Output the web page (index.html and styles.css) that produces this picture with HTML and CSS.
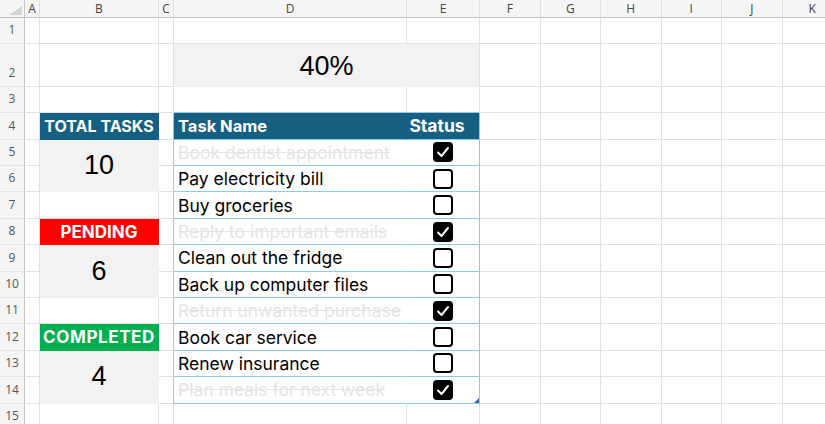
FILE: index.html
```html
<!DOCTYPE html>
<html lang="en">
<head>
    <meta charset="UTF-8">
    <meta name="viewport" content="width=device-width, initial-scale=1.0">
    <title>Task Tracker</title>
    <link rel="stylesheet" href="styles.css">
</head>
<body>
    <table class="sheet">
        <colgroup>
            <col class="w-head"><col class="w-gap"><col class="w-card"><col class="w-gap"><col class="w-task"><col class="w-status">
            <col class="w-std"><col class="w-std"><col class="w-std"><col class="w-std"><col class="w-std"><col class="w-std">
        </colgroup>
        <thead>
            <tr>
                <th class="corner"></th><th>A</th><th>B</th><th>C</th><th>D</th><th>E</th><th>F</th><th>G</th><th>H</th><th>I</th><th>J</th><th>K</th>
            </tr>
        </thead>
        <tbody>
            <tr>
                <th>1</th><td></td><td></td><td></td><td></td><td></td><td></td><td></td><td></td><td></td><td></td><td></td>
            </tr>
            <tr class="tall">
                <th>2</th><td></td><td></td><td></td><td class="progress" colspan="2">40%</td><td></td><td></td><td></td><td></td><td></td><td></td>
            </tr>
            <tr>
                <th>3</th><td></td><td></td><td></td><td class="above"></td><td class="above"></td><td></td><td></td><td></td><td></td><td></td><td></td>
            </tr>
            <tr>
                <th>4</th><td></td><td class="card teal">TOTAL TASKS</td><td class="edge"></td>
                <td class="task-head">Task Name</td><td class="status-head">Status</td>
                <td></td><td></td><td></td><td></td><td></td><td></td>
            </tr>
            <tr>
                <th>5</th><td></td><td class="count" rowspan="2">10</td><td class="edge"></td>
                <td class="task done">Book dentist appointment</td>
                <td class="status"><svg class="box" viewBox="0 0 20 20"><rect x="1" y="1" width="18" height="18" rx="3" class="on"/><path d="M5 10.5 L8.5 14 L15 6"/></svg></td>
                <td></td><td></td><td></td><td></td><td></td><td></td>
            </tr>
            <tr>
                <th>6</th><td></td><td class="edge"></td>
                <td class="task">Pay electricity bill</td>
                <td class="status"><svg class="box" viewBox="0 0 20 20"><rect x="1" y="1" width="18" height="18" rx="3"/></svg></td>
                <td></td><td></td><td></td><td></td><td></td><td></td>
            </tr>
            <tr>
                <th>7</th><td></td><td></td><td class="edge"></td>
                <td class="task">Buy groceries</td>
                <td class="status"><svg class="box" viewBox="0 0 20 20"><rect x="1" y="1" width="18" height="18" rx="3"/></svg></td>
                <td></td><td></td><td></td><td></td><td></td><td></td>
            </tr>
            <tr>
                <th>8</th><td></td><td class="card red">PENDING</td><td class="edge"></td>
                <td class="task done">Reply to important emails</td>
                <td class="status"><svg class="box" viewBox="0 0 20 20"><rect x="1" y="1" width="18" height="18" rx="3" class="on"/><path d="M5 10.5 L8.5 14 L15 6"/></svg></td>
                <td></td><td></td><td></td><td></td><td></td><td></td>
            </tr>
            <tr>
                <th>9</th><td></td><td class="count" rowspan="2">6</td><td class="edge"></td>
                <td class="task">Clean out the fridge</td>
                <td class="status"><svg class="box" viewBox="0 0 20 20"><rect x="1" y="1" width="18" height="18" rx="3"/></svg></td>
                <td></td><td></td><td></td><td></td><td></td><td></td>
            </tr>
            <tr>
                <th>10</th><td></td><td class="edge"></td>
                <td class="task">Back up computer files</td>
                <td class="status"><svg class="box" viewBox="0 0 20 20"><rect x="1" y="1" width="18" height="18" rx="3"/></svg></td>
                <td></td><td></td><td></td><td></td><td></td><td></td>
            </tr>
            <tr>
                <th>11</th><td></td><td></td><td class="edge"></td>
                <td class="task done">Return unwanted purchase</td>
                <td class="status"><svg class="box" viewBox="0 0 20 20"><rect x="1" y="1" width="18" height="18" rx="3" class="on"/><path d="M5 10.5 L8.5 14 L15 6"/></svg></td>
                <td></td><td></td><td></td><td></td><td></td><td></td>
            </tr>
            <tr>
                <th>12</th><td></td><td class="card green">COMPLETED</td><td class="edge"></td>
                <td class="task">Book car service</td>
                <td class="status"><svg class="box" viewBox="0 0 20 20"><rect x="1" y="1" width="18" height="18" rx="3"/></svg></td>
                <td></td><td></td><td></td><td></td><td></td><td></td>
            </tr>
            <tr>
                <th>13</th><td></td><td class="count" rowspan="2">4</td><td class="edge"></td>
                <td class="task">Renew insurance</td>
                <td class="status"><svg class="box" viewBox="0 0 20 20"><rect x="1" y="1" width="18" height="18" rx="3"/></svg></td>
                <td></td><td></td><td></td><td></td><td></td><td></td>
            </tr>
            <tr>
                <th>14</th><td></td><td class="edge"></td>
                <td class="task done">Plan meals for next week</td>
                <td class="status last"><svg class="box" viewBox="0 0 20 20"><rect x="1" y="1" width="18" height="18" rx="3" class="on"/><path d="M5 10.5 L8.5 14 L15 6"/></svg></td>
                <td></td><td></td><td></td><td></td><td></td><td></td>
            </tr>
            <tr>
                <th>15</th><td></td><td></td><td></td><td></td><td></td><td></td><td></td><td></td><td></td><td></td><td></td>
            </tr>
        </tbody>
    </table>
</body>
</html>
```

FILE: styles.css
```css
body {
    margin: 0;
    background: #fff;
    overflow: hidden;
}
.sheet {
    border-collapse: separate;
    border-spacing: 0;
    table-layout: fixed;
    width: 843px;
    font-family: 'Inter', sans-serif;
    color: #000;
}
.w-head { width: 25px; }
.w-gap { width: 15px; }
.w-card { width: 119px; }
.w-task { width: 233px; }
.w-status { width: 73px; }
.w-std { width: 60.5px; }

/* column and row headers */
.sheet thead th {
    height: 17px;
    padding: 0;
    background: #f5f5f5;
    border-right: 1px solid #e0e0e0;
    border-bottom: 1px solid #c4c4c4;
    font: 12px 'Open Sans', sans-serif;
    color: #444;
    text-align: center;
    box-sizing: border-box;
}
.sheet thead th.corner {
    border-right: 1px solid #c4c4c4;
    background: #f5f5f5 linear-gradient(to top left, #d4d4d4 50%, transparent 50%) no-repeat right 2px bottom 2px / 13px 9px;
}
.sheet tbody th {
    padding: 0 0 5px;
    background: #f5f5f5;
    border-right: 1px solid #c4c4c4;
    border-bottom: 1px solid #e4e4e4;
    font: 12px 'Open Sans', sans-serif;
    font-weight: normal;
    color: #555;
    text-align: center;
    vertical-align: bottom;
}
.sheet tbody tr {
    height: 26.4px;
}
.sheet tbody tr.tall {
    height: 42.5px;
}
.sheet td {
    padding: 0;
    border-right: 1px solid #e1e1e1;
    border-bottom: 1px solid #e1e1e1;
}

/* summary cards */
.progress {
    background: #f2f2f2;
    border-bottom-color: #f2f2f2 !important;
    font: 27px 'Liberation Sans', Arial, sans-serif;
    text-align: center;
    padding-top: 3px !important;
}
.card {
    color: #fff;
    font-weight: bold;
    font-size: 16px;
    text-align: center;
    border-color: transparent !important;
}
.teal { background: #156082; }
.red {
    background: #ff0000;
    font-size: 17px;
}
.green {
    background: #00b050;
    font-size: 17px;
    letter-spacing: 0.6px;
}
.count {
    background: #f2f2f2;
    border-color: transparent !important;
    font: 27px 'Liberation Sans', Arial, sans-serif;
    text-align: center;
}

/* task table */
.above {
    border-bottom-color: #8ccbeb !important;
}
.edge {
    border-right-color: #8ccbeb !important;
}
.task-head, .status-head {
    background: #156082;
    color: #fff;
    font-weight: bold;
    font-size: 16.5px;
    border-bottom-color: #8ccbeb !important;
}
.task-head {
    padding-left: 4px !important;
    border-right-color: #156082 !important;
}
.status-head {
    text-align: center;
    padding-right: 12px !important;
    font-size: 17.5px;
    border-right-color: #8ccbeb !important;
}
.task {
    padding-left: 4px !important;
    font-size: 17.5px;
    white-space: nowrap;
    border-right-color: #fff !important;
    border-bottom-color: #8ccbeb !important;
}
.task.done {
    color: #e4e4e4;
    text-decoration: line-through;
}
.status {
    text-align: center;
    border-right-color: #8ccbeb !important;
    border-bottom-color: #8ccbeb !important;
}
.status.last {
    position: relative;
}
.status.last::after {
    content: "";
    position: absolute;
    right: 0;
    bottom: 0;
    border-left: 5px solid transparent;
    border-bottom: 5px solid #3a64b4;
}
.box {
    display: block;
    width: 20px;
    height: 20px;
    margin: 0 auto;
}
.box rect {
    fill: #fff;
    stroke: #000;
    stroke-width: 2;
}
.box rect.on {
    fill: #000;
}
.box path {
    fill: none;
    stroke: #fff;
    stroke-width: 2;
    stroke-linecap: round;
    stroke-linejoin: round;
}
```
